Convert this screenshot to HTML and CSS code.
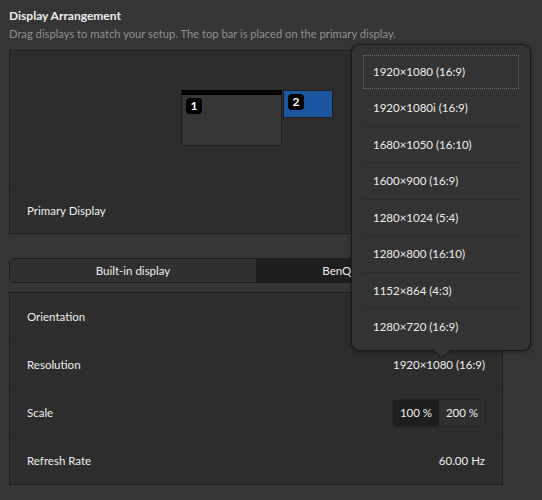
FILE: index.html
```html
<!DOCTYPE html>
<html lang="en">
<head>
  <meta charset="UTF-8" />
  <title>Displays</title>
  <link rel="stylesheet" href="styles.css">
</head>
<body>
  <div class="page">
    <div class="section-title">Display Arrangement</div>
    <div class="section-desc">Drag displays to match your setup. The top bar is placed on the primary display.</div>

    <div class="frame">
      <div class="arrangement">
        <div class="monitor monitor-primary">
          <span class="badge">1</span>
        </div>
        <div class="monitor monitor-second">
          <span class="badge">2</span>
        </div>
      </div>
      <div class="row">
        <span>Primary Display</span>
      </div>
    </div>

    <div class="tabs">
      <div class="tab">Built-in display</div>
      <div class="tab active">BenQ Corporation 24"</div>
    </div>

    <div class="frame settings">
      <div class="row">
        <span>Orientation</span>
      </div>
      <div class="row">
        <span>Resolution</span>
        <span class="value">1920&times;1080 (16:9)</span>
      </div>
      <div class="row">
        <span>Scale</span>
        <div class="scale">
          <div class="scale-btn active">100 %</div>
          <div class="scale-btn">200 %</div>
        </div>
      </div>
      <div class="row">
        <span>Refresh Rate</span>
        <span class="value">60.00 Hz</span>
      </div>
    </div>
  </div>

  <div class="popover">
    <ul class="menu">
      <li class="focused">1920&times;1080 (16:9)</li>
      <li>1920&times;1080i (16:9)</li>
      <li>1680&times;1050 (16:10)</li>
      <li>1600&times;900 (16:9)</li>
      <li>1280&times;1024 (5:4)</li>
      <li>1280&times;800 (16:10)</li>
      <li>1152&times;864 (4:3)</li>
      <li>1280&times;720 (16:9)</li>
    </ul>
    <svg class="popover-arrow" width="20" height="10" viewBox="0 0 20 10">
      <path d="M0 0 L10 9 L20 0" fill="#333333" stroke="#1a1a1a" stroke-width="1" />
      <rect x="1" y="-1" width="18" height="1.2" fill="#333333" />
    </svg>
  </div>
</body>
</html>
```

FILE: styles.css
```css
body {
  margin: 0;
  background-color: #353535;
  color: #eeeeec;
  font-family: Lato, "Noto Sans", sans-serif;
  font-size: 11.5px;
}
.page {
  width: 494px;
  padding: 8px 0 0 9px;
}
.section-title {
  font-weight: bold;
  font-size: 12px;
  line-height: 16px;
}
.section-desc {
  color: #8e9091;
  line-height: 16px;
  margin-top: 2px;
  font-size: 11.2px;
}
.frame {
  margin-top: 8px;
  background-color: #2d2d2d;
  border: 1px solid #1f1f1f;
}
.arrangement {
  position: relative;
  height: 135px;
  border-bottom: 1px solid #282828;
}
.monitor {
  position: absolute;
  top: 39px;
  box-sizing: border-box;
  border: 1px solid #1e1e1e;
}
.monitor-primary {
  left: 171px;
  width: 101px;
  height: 56px;
  background-color: #363636;
  border-top: 5px solid #000;
}
.monitor-second {
  left: 273px;
  width: 50px;
  height: 28px;
  background-color: #1b55a0;
}
.badge {
  position: absolute;
  left: 4px;
  top: 3px;
  width: 16px;
  height: 16px;
  line-height: 16px;
  border-radius: 4px;
  background-color: #000;
  color: #fff;
  font-weight: bold;
  font-size: 12px;
  text-align: center;
}
.row {
  height: 47px;
  padding: 0 17px;
  display: flex;
  align-items: center;
  justify-content: space-between;
  border-top: 1px solid #282828;
}
.arrangement + .row {
  height: 46px;
  border-top: none;
}
.settings .row:first-child {
  border-top: none;
}
.tabs {
  margin-top: 24px;
  height: 23px;
  display: flex;
  border: 1px solid #1c1c1c;
  border-radius: 5px;
  overflow: hidden;
}
.tab {
  flex: 1;
  display: flex;
  align-items: center;
  justify-content: center;
  background-color: #303030;
}
.tab.active {
  background-color: #1e1e1e;
}
.settings {
  margin-top: 9px;
}
.scale {
  display: flex;
  height: 26px;
  border: 1px solid #262626;
  border-radius: 4px;
  overflow: hidden;
  margin-right: -1px;
}
.scale-btn {
  width: 46px;
  display: flex;
  align-items: center;
  justify-content: center;
  background-color: #2f2f2f;
}
.scale-btn.active {
  background-color: #1e1e1e;
}
.popover {
  position: absolute;
  left: 351px;
  top: 44px;
  width: 178px;
  height: 305px;
  background-color: #333333;
  border: 1px solid #1a1a1a;
  border-radius: 8px;
  box-shadow: 0 1px 4px rgba(0, 0, 0, 0.35);
}
.menu {
  list-style: none;
  margin: 0;
  padding: 9px 10px 0;
}
.menu li {
  height: 35.5px;
  line-height: 35px;
  padding: 0 11px;
  border-top: 1px solid #2c2c2c;
}
.menu li:first-child,
.menu li.focused + li {
  border-top: none;
}
.menu li.focused {
  height: 32px;
  line-height: 32px;
  margin: 2px;
  padding: 0 9px;
  outline: 1px dotted #6b6b6b;
}
.popover-arrow {
  position: absolute;
  left: 80px;
  bottom: -9px;
}
```
